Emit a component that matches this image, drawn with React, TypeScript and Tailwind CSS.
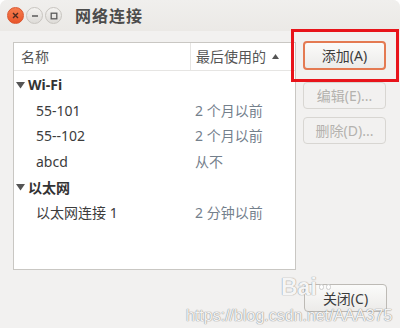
import React from "react";

const font = { fontFamily: '"Noto Sans", "Noto Sans CJK SC", sans-serif' };

function Row({ name, date, indent = true }: { name: string; date: string; indent?: boolean }) {
  return (
    <div className="flex items-center h-[25.6px] text-[14px]">
      <div className={`w-[180px] text-[#3c3c3c] ${indent ? "pl-[21px]" : ""}`}>{name}</div>
      <div className="text-[#74808c]">{date}</div>
    </div>
  );
}

function Group({ name }: { name: string }) {
  return (
    <div className="flex items-center h-[25.6px] text-[14px] font-bold text-[#333]">
      <svg width="9" height="8" viewBox="0 0 9 8" className="ml-[1px] mr-[3px]">
        <path d="M0 1 L9 1 L4.5 7.5 Z" fill="#555" />
      </svg>
      <span>{name}</span>
    </div>
  );
}

export default function App() {
  return (
    <div className="w-[400px] h-[328px] bg-white overflow-hidden relative" style={font}>
      <div className="absolute inset-0 rounded-t-[7px] bg-[#f2f1f0] flex flex-col overflow-hidden">
        {/* title bar */}
        <div className="h-[31px] flex items-center pl-[7px] bg-gradient-to-b from-[#f0efed] to-[#ebe9e6]">
          <div className="w-[17px] h-[17px] rounded-full bg-gradient-to-b from-[#f57d4e] to-[#e9552a] border border-[#d9562f] flex items-center justify-center">
            <svg width="7" height="7" viewBox="0 0 7 7">
              <path d="M1 1 L6 6 M6 1 L1 6" stroke="#4a2a20" strokeWidth="1.4" />
            </svg>
          </div>
          <div className="ml-[2px] w-[17px] h-[17px] rounded-full bg-gradient-to-b from-[#f4f3f1] to-[#dedcd8] border border-[#c7c4bf] flex items-center justify-center">
            <svg width="8" height="8" viewBox="0 0 8 8">
              <path d="M1 4 L7 4" stroke="#5a5a5a" strokeWidth="1.3" />
            </svg>
          </div>
          <div className="ml-[2px] w-[17px] h-[17px] rounded-full bg-gradient-to-b from-[#f4f3f1] to-[#dedcd8] border border-[#c7c4bf] flex items-center justify-center">
            <svg width="8" height="8" viewBox="0 0 8 8">
              <rect x="1.2" y="1.2" width="5.6" height="5.6" fill="none" stroke="#5a5a5a" strokeWidth="1.3" />
            </svg>
          </div>
          <div className="ml-[13px] text-[16px] font-bold text-[#4c4c4c] tracking-[1px]">网络连接</div>
        </div>

        {/* body */}
        <div className="flex pt-[11px] pl-[13px]">
          <div className="w-[283px] h-[228px] bg-white border border-[#c9c7c3] flex flex-col">
            <div className="flex h-[28px] border-b border-[#e6e5e3] text-[14px] text-[#555]">
              <div className="w-[177px] pl-[7px] flex items-center border-r border-[#e6e5e3]">名称</div>
              <div className="flex-1 pl-[5px] flex items-center">
                <span>最后使用的</span>
                <svg width="7" height="5" viewBox="0 0 7 5" className="ml-[6px]">
                  <path d="M0 5 L7 5 L3.5 0 Z" fill="#555" />
                </svg>
              </div>
            </div>
            <div className="pl-[1px] pt-[1px]">
              <Group name="Wi-Fi" />
              <Row name="55-101" date="2 个月以前" />
              <Row name="55--102" date="2 个月以前" />
              <Row name="abcd" date="从不" />
              <Group name="以太网" />
              <Row name="以太网连接 1" date="2 分钟以前" />
            </div>
          </div>
          <div className="ml-[7px] flex flex-col">
            <button className="w-[83px] h-[29px] mt-[-1px] rounded-[4px] border-2 border-[#e47a52] bg-gradient-to-b from-[#fbfbfa] to-[#ecebe9] text-[14px] text-[#3c3c3c] flex items-center justify-center">
              添加(A)
            </button>
            <button className="w-[83px] h-[27px] mt-[12px] rounded-[4px] border border-[#d8d6d2] bg-[#f2f1f0] text-[14px] text-[#b4b2ae] flex items-center justify-center">
              编辑(E)...
            </button>
            <button className="w-[83px] h-[27px] mt-[8px] rounded-[4px] border border-[#d8d6d2] bg-[#f2f1f0] text-[14px] text-[#b4b2ae] flex items-center justify-center">
              删除(D)...
            </button>
          </div>
        </div>

        <div className="flex justify-end pr-[13px] pt-[14px]">
          <button className="w-[83px] h-[28px] rounded-[4px] border border-[#bdbab5] bg-gradient-to-b from-[#fbfbfa] to-[#ecebe9] text-[14px] text-[#3c3c3c] flex items-center justify-center">
            关闭(C)
          </button>
        </div>
      </div>

      {/* highlight */}
      <div className="absolute left-[291px] top-[29px] w-[108px] h-[53px] border-[3px] border-[#e8141b]" />

      {/* watermark */}
      <div className="absolute left-[281px] top-[276px] flex items-end text-white/90 pointer-events-none" style={{ textShadow: "0 0 1px #999, 0 0 1px #999" }}>
        <span className="text-[23px] font-bold leading-none" style={{ fontFamily: '"Liberation Sans", sans-serif' }}>Bai</span>
        <span className="ml-[2px] mb-[9px] flex gap-[2px]">
          <span className="w-[5px] h-[6px] rounded-full bg-white/80 border border-[#ccc]" />
          <span className="w-[5px] h-[6px] rounded-full bg-white/80 border border-[#ccc]" />
        </span>
      </div>
      <div className="absolute left-[186px] top-[308px] text-[16px] leading-none text-white/90 pointer-events-none" style={{ fontFamily: '"Liberation Sans", sans-serif', textShadow: "0 0 1px #888, 0 0 1px #888" }}>
        https://blog.csdn.net/AAA375
      </div>
    </div>
  );
}
